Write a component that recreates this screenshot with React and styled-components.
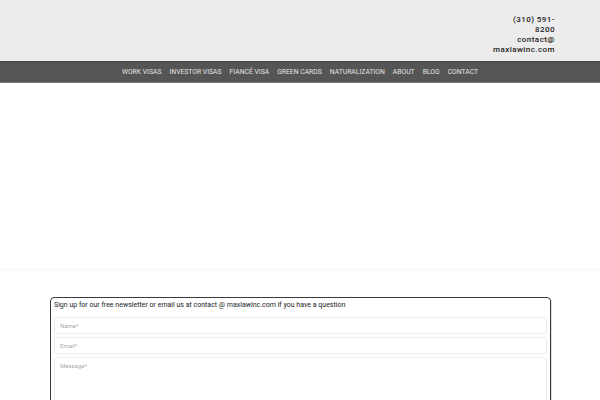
import React from "react";
import styled, { createGlobalStyle } from "styled-components";

const Global = createGlobalStyle`
  * { box-sizing: border-box; }
  body {
    margin: 0;
    font-family: Roboto, "Liberation Sans", sans-serif;
    background: #fff;
  }
`;

const Header = styled.header`
  height: 61px;
  background: #ececec;
  display: flex;
  justify-content: flex-end;
  padding: 15px 45px 0 0;
`;

const Contact = styled.div`
  width: 62px;
  text-align: right;
  font-size: 8px;
  line-height: 9.9px;
  font-weight: 500;
  letter-spacing: 0.45px;
  color: #222;
`;

const ContactLine = styled.div``;

const Nav = styled.nav`
  height: 22px;
  background: #555;
  border-top: 1px solid #444;
  border-bottom: 1px solid #777;
  display: flex;
  justify-content: center;
  align-items: center;
  gap: 8px;
`;

const NavItem = styled.a`
  color: #e4e4e4;
  font-size: 6.8px;
  font-weight: 400;
  text-transform: uppercase;
  text-decoration: none;
`;

const Hero = styled.section`
  height: 186px;
  background: #fff;
`;

const Footer = styled.section`
  border-top: 1px solid #f6f6f6;
  padding: 27px 49px 0 50px;
`;

const FormBox = styled.div`
  border: 1.5px solid #3a3a3a;
  border-radius: 4px;
  padding: 2px 3px 0 3px;
  height: 120px;
  box-shadow: 1px 1px 1px rgba(0,0,0,0.15);
`;

const Title = styled.div`
  font-size: 7px;
  color: #222;
  line-height: 11px;
  margin: 0 0 6px 0;
`;

const Field = styled.div`
  border: 1px solid #ececec;
  border-radius: 3px;
  height: ${(p) => p.h}px;
  margin-bottom: 3px;
  font-size: 6px;
  color: #aaa;
  padding: ${(p) => (p.top ? "4px 5px" : "0 5px")};
  display: flex;
  align-items: ${(p) => (p.top ? "flex-start" : "center")};
`;

const items = ["Work Visas", "Investor Visas", "Fiancé Visa", "Green Cards", "Naturalization", "About", "Blog", "Contact"];

export default function App() {
  return (
    <>
      <Global />
      <Header>
        <Contact>
          <ContactLine>(310) 591-8200</ContactLine>
          <ContactLine>contact@ maxlawinc.com</ContactLine>
        </Contact>
      </Header>
      <Nav>
        {items.map((i) => (
          <NavItem key={i}>{i}</NavItem>
        ))}
      </Nav>
      <Hero />
      <Footer>
        <FormBox>
          <Title>Sign up for our free newsletter or email us at contact @ maxlawinc.com if you have a question</Title>
          <Field h={17}>Name*</Field>
          <Field h={17}>Email*</Field>
          <Field h={60} top>Message*</Field>
        </FormBox>
      </Footer>
    </>
  );
}
